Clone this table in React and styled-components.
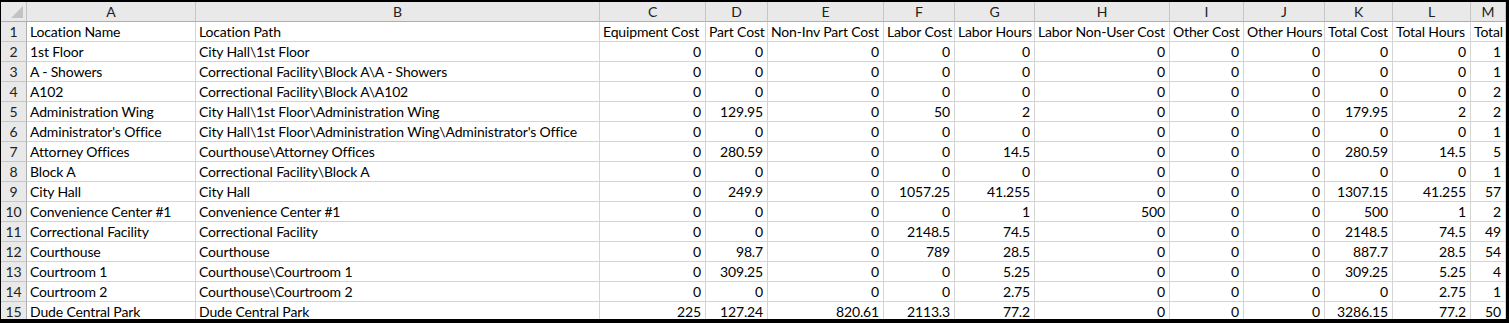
import React from "react";
import styled, { createGlobalStyle } from "styled-components";

const GlobalStyle = createGlobalStyle`
  html, body {
    margin: 0;
    padding: 0;
    background: #000;
    overflow: hidden;
  }
  #root {
    width: 1509px;
    height: 323px;
  }
`;

// row-number column, then A..M
const COLS = [26, 169, 404, 106, 62, 116, 71, 80, 135, 74, 81, 68, 78, 35];
const LETTERS = ["A", "B", "C", "D", "E", "F", "G", "H", "I", "J", "K", "L", "M"];

const HEADINGS = [
  "Location Name",
  "Location Path",
  "Equipment Cost",
  "Part Cost",
  "Non-Inv Part Cost",
  "Labor Cost",
  "Labor Hours",
  "Labor Non-User Cost",
  "Other Cost",
  "Other Hours",
  "Total Cost",
  "Total Hours",
  "Total",
];

const ROWS = [
  ["1st Floor", "City Hall\\1st Floor", 0, 0, 0, 0, 0, 0, 0, 0, 0, 0, 1],
  ["A - Showers", "Correctional Facility\\Block A\\A - Showers", 0, 0, 0, 0, 0, 0, 0, 0, 0, 0, 1],
  ["A102", "Correctional Facility\\Block A\\A102", 0, 0, 0, 0, 0, 0, 0, 0, 0, 0, 2],
  ["Administration Wing", "City Hall\\1st Floor\\Administration Wing", 0, 129.95, 0, 50, 2, 0, 0, 0, 179.95, 2, 2],
  ["Administrator's Office", "City Hall\\1st Floor\\Administration Wing\\Administrator's Office", 0, 0, 0, 0, 0, 0, 0, 0, 0, 0, 1],
  ["Attorney Offices", "Courthouse\\Attorney Offices", 0, 280.59, 0, 0, 14.5, 0, 0, 0, 280.59, 14.5, 5],
  ["Block A", "Correctional Facility\\Block A", 0, 0, 0, 0, 0, 0, 0, 0, 0, 0, 1],
  ["City Hall", "City Hall", 0, 249.9, 0, 1057.25, 41.255, 0, 0, 0, 1307.15, 41.255, 57],
  ["Convenience Center #1", "Convenience Center #1", 0, 0, 0, 0, 1, 500, 0, 0, 500, 1, 2],
  ["Correctional Facility", "Correctional Facility", 0, 0, 0, 2148.5, 74.5, 0, 0, 0, 2148.5, 74.5, 49],
  ["Courthouse", "Courthouse", 0, 98.7, 0, 789, 28.5, 0, 0, 0, 887.7, 28.5, 54],
  ["Courtroom 1", "Courthouse\\Courtroom 1", 0, 309.25, 0, 0, 5.25, 0, 0, 0, 309.25, 5.25, 4],
  ["Courtroom 2", "Courthouse\\Courtroom 2", 0, 0, 0, 0, 2.75, 0, 0, 0, 0, 2.75, 1],
  ["Dude Central Park", "Dude Central Park", 225, 127.24, 820.61, 2113.3, 77.2, 0, 0, 0, 3286.15, 77.2, 50],
];

const Frame = styled.div`
  box-sizing: border-box;
  width: 1509px;
  height: 323px;
  padding: 2px 3px 4px 1px;
  background: #000;
`;

const Sheet = styled.div`
  height: 100%;
  overflow: hidden;
  background: #fff;
  display: grid;
  grid-template-columns: ${COLS.map((w) => `${w}px`).join(" ")};
  grid-auto-rows: 20px;
  font-family: Lato, "Liberation Sans", sans-serif;
  font-size: 14px;
  letter-spacing: -0.15px;
  color: #000;
`;

const Corner = styled.div`
  box-sizing: border-box;
  background: #e9e9e9;
  border-right: 1px solid #c2c2c2;
  border-bottom: 1px solid #aeaeae;
  display: flex;
  align-items: flex-end;
  justify-content: flex-end;
  padding: 0 3px 3px 0;
`;

const ColHeader = styled.div`
  box-sizing: border-box;
  background: #e9e9e9;
  border-right: 1px solid #c6c6c6;
  border-bottom: 1px solid #aeaeae;
  display: flex;
  align-items: center;
  justify-content: center;
  color: #222;
  white-space: nowrap;
  overflow: hidden;
`;

const RowHeader = styled.div`
  box-sizing: border-box;
  background: #e9e9e9;
  border-right: 1px solid #aeaeae;
  border-bottom: 1px solid #c6c6c6;
  display: flex;
  align-items: flex-end;
  justify-content: center;
  padding-bottom: 1px;
  color: #222;
`;

const Cell = styled.div`
  box-sizing: border-box;
  border-right: 1px solid #d4d4d4;
  border-bottom: 1px solid #d4d4d4;
  display: flex;
  align-items: flex-end;
  justify-content: ${({ $num }) => ($num ? "flex-end" : "flex-start")};
  padding: ${({ $num }) => ($num ? "0 4px 1px 0" : "0 0 1px 3px")};
  white-space: nowrap;
  overflow: hidden;
`;

function SelectAll() {
  return (
    <svg width="12" height="12" viewBox="0 0 12 12">
      <polygon points="12,0 12,12 0,12" fill="#c3c3c3" />
    </svg>
  );
}

export default function App() {
  return (
    <>
      <GlobalStyle />
      <Frame>
        <Sheet>
          <Corner>
            <SelectAll />
          </Corner>
          {LETTERS.map((l) => (
            <ColHeader key={l}>{l}</ColHeader>
          ))}

          <RowHeader>1</RowHeader>
          {HEADINGS.map((h) => (
            <Cell key={h}>{h}</Cell>
          ))}

          {ROWS.map((row, i) => (
            <React.Fragment key={i}>
              <RowHeader>{i + 2}</RowHeader>
              {row.map((v, j) => (
                <Cell key={j} $num={typeof v === "number"}>
                  {v}
                </Cell>
              ))}
            </React.Fragment>
          ))}
        </Sheet>
      </Frame>
    </>
  );
}
